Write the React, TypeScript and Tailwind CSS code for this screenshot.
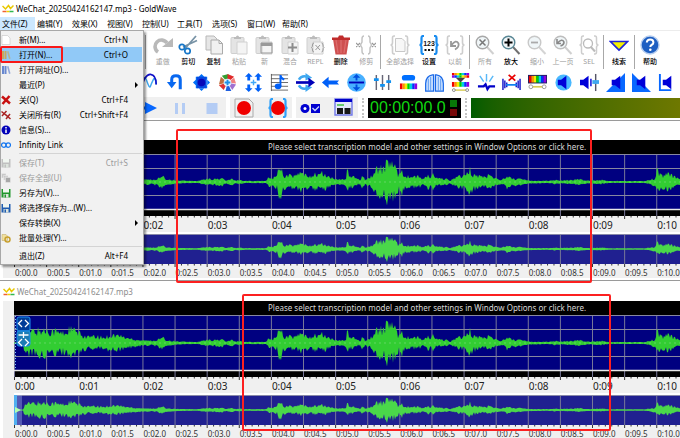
import type { ReactNode } from "react";

const FONT = "font-['Noto_Sans','Noto_Sans_CJK_SC',sans-serif]";

/* ---------- waveform data ---------- */

const PLOT_WIDTH = 666;
const SECONDS = 10.37;
const PX_PER_SECOND = PLOT_WIDTH / SECONDS;

// Loudness envelope as [position, peak] pairs, in plot units.
const ENVELOPE: [number, number][] = [
  [0, 0], [9, 0.4], [10, 8], [12, 13], [18, 14], [26, 15], [40, 15], [46, 12], [52, 12], [54, 16], [59, 16],
  [62, 13], [68, 9], [74, 7], [84, 7], [90, 6], [96, 9], [104, 9], [112, 6], [120, 4], [128, 3], [136, 2],
  [143, 3], [148, 6], [152, 3], [158, 2], [166, 1], [184, 0.6], [188, 2], [194, 3], [202, 3], [208, 4],
  [212, 1], [218, 3], [222, 1], [226, 2], [230, 0.7], [252, 0.8], [254, 4], [260, 5], [263, 7], [265, 21],
  [267, 19], [269, 8], [274, 7], [278, 8], [281, 6], [286, 11], [292, 7], [300, 8], [308, 10], [314, 6],
  [319, 4], [323, 2], [330, 3], [332, 4], [333, 15], [335, 7], [339, 6], [343, 3], [346, 2], [348, 8],
  [351, 3], [355, 4], [358, 8], [362, 13], [366, 19], [369, 15], [373, 22], [377, 26], [380, 18], [383, 11],
  [386, 9], [387, 19], [389, 9], [394, 6], [404, 6], [410, 3], [414, 8], [417, 4], [419, 10], [422, 4],
  [432, 3], [436, 1], [441, 5], [447, 7], [452, 6], [454, 13], [456, 14], [459, 9], [465, 7], [472, 5],
  [475, 10], [478, 5], [484, 3], [491, 3], [493, 8], [497, 4], [506, 3], [518, 1], [534, 0.8], [542, 2],
  [548, 1], [556, 2], [564, 3], [574, 1], [588, 2], [594, 0.6], [630, 0.6], [636, 2], [641, 4], [643, 14],
  [648, 7], [654, 9], [660, 6], [666, 3],
];

function envelopeAt(x: number) {
  for (let i = 1; i < ENVELOPE.length; i++) {
    const [x1, y1] = ENVELOPE[i];
    if (x <= x1) {
      const [x0, y0] = ENVELOPE[i - 1];
      return y0 + ((y1 - y0) * (x - x0)) / (x1 - x0);
    }
  }
  return 3;
}

function noise(n: number) {
  const s = Math.sin(n * 127.1) * 43758.5453;
  return s - Math.floor(s);
}

function wavePath(center: number, scale: number) {
  const top: string[] = [];
  const bottom: string[] = [];
  for (let x = 0; x <= PLOT_WIDTH; x += 1) {
    const peak = envelopeAt(x) * scale;
    top.push(`${x},${(center - 0.5 - peak * (0.4 + 0.7 * noise(x))).toFixed(1)}`);
    bottom.unshift(`${x},${(center + 0.5 + peak * (0.38 + 0.68 * noise(x + 900))).toFixed(1)}`);
  }
  return `M${top.join("L")}L${bottom.join("L")}Z`;
}

const MAIN_WAVE = wavePath(27, 1);
const OVERVIEW_WAVE = wavePath(15, 0.54);
const HALF_SECONDS = Array.from({ length: 21 }, (_, i) => i);
const TENTHS = Array.from({ length: 104 }, (_, i) => i);

/* ---------- icons ---------- */

function Icon({ children, size = 20 }: { children: ReactNode; size?: number }) {
  return (
    <svg width={size} height={size} viewBox="0 0 20 20" fill="none" aria-hidden="true">
      {children}
    </svg>
  );
}

const RAINBOW = ["#f00000", "#ff9000", "#f0f000", "#00d000", "#00d0e0", "#0030ff", "#9000e0"];

function Rainbow({ x, y, w, h, flip = false }: { x: number; y: number; w: number; h: number; flip?: boolean }) {
  const colors = flip ? [...RAINBOW].reverse() : RAINBOW;
  return (
    <>
      {colors.map((c, i) => (
        <rect key={c} x={x + (i * w) / 7} y={y} width={w / 7 + 0.1} height={h} fill={c} />
      ))}
    </>
  );
}

function Clipboard() {
  return (
    <>
      <rect x="2" y="2.500" width="13" height="16" rx="1" fill="#e4e4e4" stroke="#cfcfcf" />
      <path d="M5 4V2h2a1.500 1.500 0 0 1 3 0h2v2z" fill="#bcbcbc" />
      <path d="M8 7h10v12H8z" fill="#f4f4f4" stroke="#d0d0d0" />
    </>
  );
}

function Magnifier({ color, handle, children }: { color: string; handle: string; children?: ReactNode }) {
  return (
    <>
      <path d="M12 12l6.500 7" stroke={handle} strokeWidth="2" />
      <circle cx="7.500" cy="7.500" r="6.300" fill="#f0f6f8" stroke={color} strokeWidth="1.400" />
      {children}
    </>
  );
}

function Braces({ color, width = 2 }: { color: string; width?: number }) {
  return (
    <path
      d="M5 1H4Q2.500 1 2.500 3v4.500Q2.500 10 .5 10q2 0 2 2.500V17q0 2 1.500 2h1M15 1h1q1.500 0 1.500 2v4.500q0 2.500 2 2.500-2 0-2 2.500V17q0 2-1.500 2h-1"
      stroke={color}
      strokeWidth={width}
    />
  );
}

function Speaker({ x = 0 }: { x?: number }) {
  return <path d={`M${x + 2} 7h3.500L${x + 11} 3v14l-5.500-4H${x + 2}z`} fill="#0000d8" />;
}

const redo = (
  <Icon>
    <path d="M5 17A6.500 6.500 0 1 1 14 8" stroke="#b9b9b9" strokeWidth="3.600" />
    <path d="M9 12h11V3z" fill="#b9b9b9" />
  </Icon>
);
const cut = (
  <Icon>
    <path d="M18 1L7.500 13M19 5.500L5 12" stroke="#7893a6" strokeWidth="1.800" />
    <circle cx="4" cy="12" r="2.700" stroke="#1676c8" strokeWidth="1.700" />
    <circle cx="9.500" cy="16" r="2.700" stroke="#1676c8" strokeWidth="1.700" />
  </Icon>
);
const copy = (
  <Icon>
    <path d="M2 1h8l3 3v11H2z" fill="#e6e6e6" stroke="#b8b8b8" />
    <path d="M7 5h8l3.500 3.500V19H7z" fill="#f1f1f1" stroke="#aaa" />
    <path d="M15 5v3.500h3.500" stroke="#aaa" />
  </Icon>
);
const paste = <Icon><Clipboard /></Icon>;
const pasteNew = (
  <Icon>
    <Clipboard />
    <path d="M7 8h11v10H7z" stroke="#999" />
    <path d="M7 8h11v3H7z" fill="#999" />
  </Icon>
);
const mix = (
  <Icon>
    <Clipboard />
    <path d="M12.500 8v9M8 12.500h9" stroke="#8c8c8c" strokeWidth="2" />
  </Icon>
);
const replace = (
  <Icon>
    <Clipboard />
    <path d="M9 8Q7.500 8 7.500 10t-1 2.500q1 .5 1 2.500T9 17M16.500 8q1.500 0 1.500 2t1 2.500q-1 .5-1 2.500t-1.500 2M10.500 10l4.500 5M15 10l-4.500 5" stroke="#999" />
  </Icon>
);
const trash = (
  <Icon>
    <path d="M2 4l2.500 15.500h11L18 4z" fill="#cf5050" />
    <path d="M5 5l2 13M10 5v13M15 5l-2 13" stroke="#dc6c6c" strokeWidth="1.300" />
    <path d="M1 2.500h6L8 .5h4l1 2h6v2.500H1z" fill="#c02c2c" />
  </Icon>
);
const trim = (
  <Icon>
    <path d="M8 1Q6 1 6 4v3l-1.500 3L6 13v3q0 3 2 3M12 1q2 0 2 3v3l1.500 3-1.500 3v3q0 3-2 3" stroke="#c4c4c4" strokeWidth="1.500" />
    <path d="M0 8l4 4M4 8l-4 4M16 8l4 4M20 8l-4 4" stroke="#999" strokeWidth="1.200" />
  </Icon>
);
const selectAll = (
  <Icon>
    <Braces color="#cdcdcd" width={1.6} />
    <path d="M5.500 3.500H12l3 3v10H5.500z" fill="#f7f7f7" stroke="#c8c8c8" />
  </Icon>
);
const setSelection = (
  <Icon>
    <Braces color="#178bf0" width={2.2} />
    <text x="10" y="10.500" textAnchor="middle" fontSize="7" fontWeight="700" fill="#111" fontFamily="Liberation Sans">123</text>
    <path d="M5.500 15h2M9 15h2M12.500 15h2" stroke="#111" strokeWidth="2" />
  </Icon>
);
const previous = (
  <Icon>
    <Braces color="#cdcdcd" width={1.600} />
    <path d="M6 6v5h5M6.500 10Q11 4 13.500 8.500 14.500 12 10 14.500" stroke="#999" strokeWidth="1.800" />
  </Icon>
);
const zoomAll = <Icon><Magnifier color="#a8a8a8" handle="#d0d0d0"><path d="M4.500 4.500l6 6M10.500 4.500l-6 6" stroke="#777" strokeWidth="1.500" /></Magnifier></Icon>;
const zoomIn = <Icon><Magnifier color="#5a8795" handle="#707070"><path d="M7.500 3.500v8M3.500 7.500h8" stroke="#000" strokeWidth="2" /></Magnifier></Icon>;
const zoomOut = <Icon><Magnifier color="#c8c8c8" handle="#d4d4d4"><path d="M4 7.500h7" stroke="#aaa" strokeWidth="1.800" /></Magnifier></Icon>;
const zoomPrev = <Icon><Magnifier color="#bdbdbd" handle="#d0d0d0"><path d="M4 4v4.500h4M4.500 8Q9 3 11 7q0 3-3.500 4" stroke="#888" strokeWidth="1.600" /></Magnifier></Icon>;
const zoomSel = (
  <Icon>
    <Braces color="#cdcdcd" width={1.500} />
    <path d="M11.500 11.500l4.500 5" stroke="#bbb" strokeWidth="2" />
    <circle cx="9" cy="8.500" r="4.500" stroke="#bbb" strokeWidth="1.300" />
  </Icon>
);
const cue = <Icon><path d="M1.500 6.500h17L10 15z" fill="#f4f000" stroke="#1f24d8" strokeWidth="1.600" /></Icon>;
const help = (
  <Icon>
    <circle cx="10" cy="10" r="9" fill="#1e5fc2" stroke="#b6cdee" strokeWidth="1.400" />
    <path d="M6.800 7.500Q7 4.500 10.200 4.500t3.200 3Q13.400 9 11.500 10 10.300 10.600 10.300 12" stroke="#fff" strokeWidth="2" />
    <circle cx="10.300" cy="14.800" r="1.300" fill="#fff" />
  </Icon>
);

const EFFECTS: [string, ReactNode][] = [
  ["多普勒", <><path d="M0 16Q4-1 7 8t4 6 3-7 3 5" stroke="#40a8f0" strokeWidth="1.500" /><path d="M1 17Q5 1 11 1.500T17 12" stroke="#1010c8" strokeWidth="1.800" /></>],
  ["反向", <><path d="M15 17V7q0-4-4.500-4T6 7v4" stroke="#0868f0" strokeWidth="3.200" /><path d="M1 9.500h10L6 16z" fill="#0868f0" /></>],
  ["动态", <><path d="M10 1l3.500 3.500h-7zM10 19l3.500-3.500h-7zM1 10l3.500-3.500v7zM19 10l-3.500-3.500v7zM4 4h12v12H4z" fill="#0070f8" /><path d="M5 4h10v12H5z" fill="#0848e0" /><circle cx="10" cy="10" r="4" fill="#0808b8" /></>],
  ["回声", <><path d="M10 10L4 3l7-2z" fill="#30a030" /><path d="M10 10V1l7 3z" fill="#e02828" /><path d="M10 10l7-5 2 6z" fill="#f08080" /><path d="M10 10l9 2-4 6z" fill="#a070d0" /><path d="M10 10l4 9H8z" fill="#2060e0" /><path d="M10 10l-4 8-5-5z" fill="#e03030" /><path d="M10 10L1 12l2-8z" fill="#c07040" /><circle cx="10" cy="10" r="4" fill="#e8f6ff" /><path d="M10 7v6M7 10h6" stroke="#2090e8" strokeWidth="2" /></>],
  ["均衡", <><path d="M5 0l4 4H6.500v4h-3V4H1zM15 0l4 4h-2.500v4h-3V4H11zM5 20l4-4H6.500v-4h-3v4H1zM15 20l4-4h-2.500v-4h-3v4H11z" fill="#0060f8" /><path d="M10 7v6M7 10h6" stroke="#40a8f8" strokeWidth="1.500" /></>],
  ["音高", <><path d="M1 2h18M1 6h18M1 10h18M1 14h18M1 18h18M1.500 1v18" stroke="#555" strokeWidth=".9" /><path d="M11 14V2q0 3 4 5" stroke="#0060f8" strokeWidth="2" /><ellipse cx="8.500" cy="14" rx="3.500" ry="3" fill="#0060f8" /></>],
  ["机械化", <><path d="M3 7Q6 2 12 4M3 13q3 5 9 3" stroke="#40a8f0" strokeWidth="2.600" /><path d="M10 0l7 5-7 3zM10 20l7-5-7-3z" fill="#40a8f0" /><path d="M0 10h14" stroke="#0000b8" strokeWidth="2.800" /><path d="M13 5l7 5-7 5z" fill="#0000b8" /></>],
  ["偏移", <><path d="M19 8H8V4l-7 6 7 6v-4h11l-2-2z" fill="#0060f8" /></>],
  ["压缩", <><circle cx="10" cy="10" r="9.800" fill="#48b0ff" /><path d="M2 10h16" stroke="#0000b8" strokeWidth="2" /><path d="M10 1l4 4h-3v3H9V5H6zM10 19l4-4h-3v-3H9v3H6z" fill="#0050e0" /></>],
  ["均衡器", <><path d="M3.500 2v16M10 2v16M16.500 2v16" stroke="#667" strokeWidth="1.500" /><path d="M1 7h5M7.500 13h5M14 9h5" stroke="#1090f0" strokeWidth="3" /></>],
  ["滤波器", <><rect x="3" y="2" width="14" height="6" rx="3" fill="#0070ff" /><Rainbow x={1} y={11} w={18} h={6} /></>],
  ["噪音门", <><path d="M.7 19v-8Q1 3 8 2h1v17zM19.300 19v-8Q19 3 12 2h-1v17z" fill="#d0e4ff" stroke="#1868e8" strokeWidth="1.300" /><path d="M3.500 6v13M6 4v15M14 4v15M16.500 6v13" stroke="#5898f0" /></>],
  ["频谱", <><Rainbow x={1} y={0} w={18} h={2.500} /><Rainbow x={1} y={2.500} w={18} h={2.500} flip /><path d="M5 5h10l-5 5z" fill="#444" /><Rainbow x={1} y={9.500} w={18} h={5} /><path d="M4 18h12" stroke="#d8cc50" strokeWidth="1.500" /><circle cx="3" cy="18" r="1.500" fill="#fff" stroke="#888" /><circle cx="17" cy="18" r="1.500" fill="#fff" stroke="#888" /></>],
  ["爆音", <><path d="M10 9V1M7 9L3 3M13 9l4-6" stroke="#58b8f8" strokeWidth="1.500" /><path d="M1 14h6l2-2 2 5 2-3h6" stroke="#0000c8" strokeWidth="2.400" /></>],
  ["静音", <><path d="M1 6v12M3 8v8M5 10v5M15 10v5M17 8v8M19 6v12" stroke="#1010c8" strokeWidth="1.500" /><path d="M4 12.500h12" stroke="#1080f0" strokeWidth="1.800" /><path d="M7 2l7 6M14 2L7 8" stroke="#e80000" strokeWidth="1.800" /></>],
  ["谱段", <><path d="M0 2h20v9H0z" fill="#202060" /><Rainbow x={1} y={3} w={18} h={7} /><path d="M4 14.500h12" stroke="#d8cc50" strokeWidth="1.800" /><circle cx="3" cy="14.500" r="2" fill="#fff" stroke="#999" /><circle cx="17" cy="14.500" r="2" fill="#fff" stroke="#999" /></>],
  ["最大音量", <><circle cx="10" cy="10" r="8.500" fill="#48b8ff" /><Speaker x={2} /></>],
  ["更改音量", <><Speaker x={-2} /><path d="M11.500 6v8" stroke="#0000d8" strokeWidth="1.500" /><path d="M16.500 1v18" stroke="#556" strokeWidth="1.500" /><path d="M13 9.500h7" stroke="#40a8f0" strokeWidth="4" /></>],
  ["淡入", <><path d="M0 20L20 0v20z" fill="#0868ff" /><Speaker x={4} /></>],
  ["淡出", <><path d="M0 0l20 20H0z" fill="#0868ff" /><Speaker x={3} /></>],
  ["匹配音量", <><path d="M2 1v17h12" stroke="#0868ff" strokeWidth="2" /><Speaker x={3} /></>],
];

/* ---------- toolbar pieces ---------- */

function ToolButton({ label, icon, on = false, wide = false }: { label: string; icon: ReactNode; on?: boolean; wide?: boolean }) {
  return (
    <button type="button" className={`flex min-w-0 flex-col items-center gap-0.5 whitespace-nowrap ${wide ? "w-8 shrink-0" : "flex-1"}`}>
      {icon}
      <span className={`text-[7px] leading-[10px] ${on ? "font-medium text-black" : "text-[#a0a0a0]"}`}>{label}</span>
    </button>
  );
}

const Divider = () => <span className="mx-px h-9 w-px shrink-0 bg-[#a8a8a8]" />;
const Grip = () => <span className="mx-1 h-5 shrink-0 border-l-2 border-dotted border-[#c4c4c4]" />;

function Toolbars() {
  return (
    <div className="border-y border-t-[#ececec] border-b-[#9a9a9a] bg-white">
      <div className="flex h-[38px] items-start overflow-hidden pt-1 pl-36">
        <Divider />
        <div className="flex w-[232px] shrink-0 pl-[3px]">
          <ToolButton label="重做" icon={redo} />
          <ToolButton label="剪切" icon={cut} on />
          <ToolButton label="复制" icon={copy} on />
          <ToolButton label="粘贴" icon={paste} />
          <ToolButton label="新" icon={pasteNew} />
          <ToolButton label="混合" icon={mix} />
          <ToolButton label="REPL" icon={replace} />
          <ToolButton label="删除" icon={trash} on />
          <ToolButton label="修剪" icon={trim} />
        </div>
        <Divider />
        <div className="flex w-[86px] shrink-0 pl-0.5">
          <ToolButton label="全部选择" icon={selectAll} wide />
          <ToolButton label="设置" icon={setSelection} on />
          <ToolButton label="以前" icon={previous} />
        </div>
        <Divider />
        <div className="flex w-[131px] shrink-0 pl-px">
          <ToolButton label="所有" icon={zoomAll} />
          <ToolButton label="放大" icon={zoomIn} on />
          <ToolButton label="缩小" icon={zoomOut} />
          <ToolButton label="上一页" icon={zoomPrev} />
          <ToolButton label="SEL" icon={zoomSel} />
        </div>
        <Divider />
        <div className="flex w-7 shrink-0"><ToolButton label="线索" icon={cue} on /></div>
        <Divider />
        <div className="flex w-7 shrink-0"><ToolButton label="帮助" icon={help} on /></div>
      </div>

      <div className="flex h-[26px] items-center overflow-hidden pl-[137px]">
        {EFFECTS.map(([name, art]) => (
          <button key={name} type="button" aria-label={name} className="flex flex-1 justify-center">
            <Icon size={19}>{art}</Icon>
          </button>
        ))}
      </div>

      <div className="flex h-[25px] items-center overflow-hidden">
        <div className="flex h-[21px] w-[226px] shrink-0 items-center gap-3 bg-[#f0f0f0] pl-[138px]">
          <button type="button" aria-label="播放"><Icon><path d="M0 8.500h7V4l12 6-12 6v-4.500H0z" fill="#0868ff" /></Icon></button>
          <button type="button" aria-label="暂停"><Icon><path d="M5 5h3v11H5zM12 5h3v11h-3z" fill="#b4ccf4" /></Icon></button>
          <button type="button" aria-label="停止"><Icon><path d="M4.500 5h11v11h-11z" fill="#b4ccf4" /></Icon></button>
        </div>
        <div className="ml-1 flex h-[21px] w-[62px] shrink-0 items-center justify-between bg-[#f0f0f0] px-1">
          <button type="button" aria-label="录音"><Icon><path d="M1 1h14l4 4v14H1z" fill="#f0f0f0" stroke="#aaa" /><circle cx="10" cy="10" r="7" fill="#f00000" /></Icon></button>
          <button type="button" aria-label="录制选区"><Icon><Braces color="#30a0f8" width={2.2} /><circle cx="10" cy="10" r="7" fill="#f00000" /></Icon></button>
        </div>
        <div className="ml-1 flex h-[21px] w-[62px] shrink-0 items-center justify-between bg-[#f0f0f0] px-1">
          <button type="button" aria-label="设置"><Icon><circle cx="5" cy="10.500" r="4.500" fill="#0000d0" /><circle cx="5" cy="10.500" r="1.500" fill="#fff" /><path d="M11 6h9v9h-9z" fill="#0000d0" /><path d="M12.500 10l2.500 2.500 4-4" stroke="#c8d8ff" strokeWidth="1.300" /></Icon></button>
          <button type="button" aria-label="显示窗口"><Icon><path d="M1 1h17v16H1z" fill="#e4e8f8" stroke="#7078e8" strokeWidth="1.400" /><path d="M1 1h17v3H1z" fill="#0000c8" /><path d="M3 10h6v6H3zM10.500 10h6v6h-6z" fill="#181818" /><path d="M3 7h7" stroke="#40c040" strokeWidth="1.500" /></Icon></button>
        </div>
        <Grip />
        <div className="flex h-5 w-[93px] shrink-0 items-center justify-between bg-black pr-1 pl-0.5">
          <output className="font-['Liberation_Sans',sans-serif] text-[16px] leading-5 text-[#10d810]">00:00:00.0</output>
          <span className="flex flex-col gap-0.5">
            <span className="h-[7px] w-[7px] bg-[#087808]" />
            <span className="h-[7px] w-[7px] bg-[#780808]" />
          </span>
        </div>
        <Grip />
        <div className="h-5 flex-1 bg-linear-to-r from-[#005c00] to-[#6e7800]" />
      </div>
    </div>
  );
}

/* ---------- file menu ---------- */

type Entry = { label: string; keys?: string; icon?: ReactNode; more?: boolean; off?: boolean; active?: boolean };

const disk = (color: string) => (
  <><path d="M1 2h18v17H1z" fill={color} /><path d="M4 2h12v7H4z" fill="#f0f6f0" /><path d="M5 12h10v7H5z" fill="#dde4dd" /><path d="M7 13h3v6H7z" fill={color} /></>
);
const books = (color: string) => (
  <><path d="M2 2h4v16H2zM7 2h4v16H7z" fill={color} /><path d="M12 3l3-1 4 15-3 1z" fill={color} opacity=".7" /></>
);

const MENU: Entry[][] = [
  [
    { label: "新(M)...", keys: "Ctrl+N", icon: <path d="M2 1h11l5 5v13H2z" fill="#fff" stroke="#bbb" /> },
    { label: "打开(N)...", keys: "Ctrl+O", icon: books("#c8a860"), active: true },
    { label: "打开网址(O)...", icon: books("#6888d0") },
    { label: "最近(P)", more: true },
    { label: "关(Q)", keys: "Ctrl+F4", icon: <path d="M2 3l16 14M17 2L3 18" stroke="#c81010" strokeWidth="5" /> },
    { label: "关闭所有(R)", keys: "Ctrl+Shift+F4", icon: <path d="M1 3l11 9M11 2L2 12M9 9l10 9M18 8l-8 10" stroke="#a82020" strokeWidth="3" /> },
    { label: "信息(S)...", icon: <><circle cx="10" cy="10" r="9" fill="#0000b8" /><path d="M10 9v7M10 4v3" stroke="#fff" strokeWidth="3" /></> },
    { label: "Infinity Link", icon: <><circle cx="5.500" cy="10" r="4.500" stroke="#1878f0" strokeWidth="2.500" /><circle cx="14.500" cy="10" r="4.500" stroke="#1878f0" strokeWidth="2.500" /></> },
  ],
  [
    { label: "保存(T)", keys: "Ctrl+S", icon: disk("#c0c0c0"), off: true },
    { label: "保存全部(U)", icon: <><path d="M1 1h9v9H1zM5 5h9v9H5z" fill="#c8c8c8" stroke="#eee" /><path d="M9 9h10v10H9z" fill="#a8a8a8" stroke="#eee" /></>, off: true },
    { label: "另存为(V)...", icon: disk("#20962c") },
    { label: "将选择保存为...(W)...", icon: disk("#205cb0") },
    { label: "保存转换(X)", more: true },
    { label: "批量处理(Y)...", icon: <><path d="M2 3h8l3 3v9H2z" fill="#f0e0a0" stroke="#c0a860" /><circle cx="13" cy="13" r="5" stroke="#c8a030" strokeWidth="3" /></> },
  ],
  [{ label: "退出(Z)", keys: "Alt+F4" }],
];

function FileMenu() {
  return (
    <div role="menu" className="absolute top-full left-0 z-20 w-36 border border-[#a8a8a8] bg-[#f1f1f1] py-px pr-px shadow-[2px_2px_2px_rgba(0,0,0,0.4)]">
      {MENU.map((group, g) => (
        <div key={g}>
          {g > 0 && <div className="my-px ml-[18px] h-px bg-[#d4d4d4]" />}
          {group.map((e) => (
            <button
              key={e.label}
              type="button"
              role="menuitem"
              disabled={e.off}
              className={`relative flex h-[15px] w-full items-center whitespace-nowrap text-left text-[8px] leading-[15px] ${e.off ? "text-[#9a9a9a]" : "text-black"} ${e.active ? "bg-[#91c9f7]" : ""}`}
            >
              <span className="w-[18px] shrink-0">{e.icon && <Icon size={10}>{e.icon}</Icon>}</span>
              <span className="flex-1">{e.label}</span>
              {e.keys && <span className="pr-3.5">{e.keys}</span>}
              {e.more && <span className="mr-1 border-y-[3px] border-l-[3px] border-y-transparent border-l-black" />}
              {e.active && <span className="absolute -inset-y-px -left-px w-[63px] rounded-xs border-2 border-[#f81818]" />}
            </button>
          ))}
        </div>
      ))}
    </div>
  );
}

const MENU_BAR = ["文件(Z)", "编辑(Y)", "效果(X)", "视图(V)", "控制(U)", "工具(T)", "选项(S)", "窗口(W)", "帮助(R)"];

const Logo = () => (
  <svg width="12" height="10" viewBox="0 0 24 20" fill="none" aria-hidden="true">
    <path d="M1 4l6 6 6-7 4 6 6-6" stroke="#e8c800" strokeWidth="3" />
    <path d="M1 15h8" stroke="#f06030" strokeWidth="3" />
    <path d="M9 15h6" stroke="#f0d000" strokeWidth="3" />
    <path d="M15 15h8" stroke="#30b850" strokeWidth="3" />
  </svg>
);

/* ---------- sound windows ---------- */

function GridLines({ height }: { height: number }) {
  return (
    <>
      {HALF_SECONDS.map((i) => (
        <line key={i} x1={(i * PX_PER_SECOND) / 2 + 0.5} x2={(i * PX_PER_SECOND) / 2 + 0.5} y1="0" y2={height} stroke="#777798" />
      ))}
    </>
  );
}

function Ticks({ every }: { every: number }) {
  return (
    <svg className="block h-[3px] w-full" viewBox={`0 0 ${PLOT_WIDTH} 3`} preserveAspectRatio="none" aria-hidden="true">
      {TENTHS.map((i) => (
        <line key={i} x1={(i * PX_PER_SECOND) / 10 + 0.5} x2={(i * PX_PER_SECOND) / 10 + 0.5} y1="0" y2={i % every === 0 ? 3 : 1.5} stroke="#333" />
      ))}
    </svg>
  );
}

function Ruler({ step, className }: { step: number; className: string }) {
  const count = Math.ceil(SECONDS / step);
  return (
    <div className={`flex ${className}`}>
      {Array.from({ length: count }, (_, i) => (
        <span key={i} className="shrink-0 pl-px" style={{ width: `${(100 * step) / SECONDS}%` }}>
          {step === 1 ? `0:${String(i).padStart(2, "0")}` : `0:${(i * step).toFixed(1).padStart(4, "0")}`}
        </span>
      ))}
    </div>
  );
}

function SoundWindow({ title, selected = false }: { title?: string; selected?: boolean }) {
  return (
    <section className="mb-px border-b border-[#9a9a9a] bg-white pb-0.5 pl-[3px]">
      <div className="flex h-[19px] items-center gap-0.5 text-[8px] text-[#8c8c8c]">
        {title && <><Logo />{title}</>}
      </div>
      <div className="bg-[#f0f0f0] pl-[11px]">
        <div className="h-3.5 bg-black pl-[254px] text-[8px] leading-3.5 whitespace-nowrap text-[#d8d8d8]">
          Please select transcription model and other settings in Window Options or click here.
        </div>
        <svg className="block h-[62px] w-full" viewBox="0 0 666 62" preserveAspectRatio="none" aria-hidden="true">
          <rect width="666" height="62" fill="#000" />
          <rect y="1" width="666" height="54" fill="#000080" />
          <GridLines height={62} />
          <path d="M0 .5h666M0 14.500h666M0 41.500h666" stroke="#8888a0" />
          <path d="M0 55.500h666" stroke="#e8e8e8" strokeWidth="1.500" />
          <g transform="translate(0 1)">
            <path d={MAIN_WAVE} fill="#32cd32" />
            <path d="M0 27h666" stroke="#8ce08c" strokeWidth=".8" strokeDasharray="2 3" opacity=".7" />
          </g>
          {selected && (
            <>
              <path d="M1.500 1v54" stroke="#80c8ff" strokeDasharray="1 2" />
              <rect x="3" y="2" width="13" height="14" rx="2" fill="#003c98" stroke="#1890f0" />
              <rect x="3" y="16" width="13" height="15" rx="2" fill="#1c7cb4" stroke="#1890f0" />
              <path d="M8 5L4.500 8.500 8 12M11 5l3.500 3.500L11 12M8 24l-3.500 3.500L8 31M11 24l3.500 3.500L11 31M4.500 20h10M9.500 17v6" stroke="#fff" strokeWidth="1.300" fill="none" />
            </>
          )}
        </svg>
        <Ticks every={5} />
        <Ruler step={1} className="h-[13px] text-[10px] leading-[13px] text-[#222]" />
        <div className="h-0.5 bg-white" />
        <svg className="block h-[30px] w-full" viewBox="0 0 666 30" preserveAspectRatio="none" aria-hidden="true">
          <rect width="666" height="30" fill="#202090" />
          <GridLines height={30} />
          <path d="M0 .5h666" stroke="#8888a8" />
          <path d={OVERVIEW_WAVE} fill="#4ad84a" />
          {selected && (
            <>
              <rect width="3" height="30" fill="#50b0f0" />
              <rect x="3" width="5" height="30" fill="#a0b0e8" opacity=".4" />
              <path d="M1 12l6 3-6 3z" fill="#b0ffb0" />
            </>
          )}
        </svg>
        <Ticks every={5} />
        <Ruler step={0.5} className="h-[11px] text-[8px] leading-[11px] text-[#333]" />
      </div>
    </section>
  );
}

export default function App() {
  return (
    <main className={`relative h-screen overflow-hidden bg-white text-black ${FONT}`}>
      <header className="flex h-[17px] items-center gap-0.5 pl-0.5 text-[8px] leading-4">
        <Logo />
        <h1>WeChat_20250424162147.mp3 - GoldWave</h1>
      </header>
      <nav className="relative flex h-[13px]">
        {MENU_BAR.map((m, i) => (
          <button key={m} type="button" className={`w-[35px] px-0.5 text-left text-[8px] leading-[13px] whitespace-nowrap ${i === 0 ? "bg-[#cce8ff]" : ""}`}>
            {m}
          </button>
        ))}
        <FileMenu />
      </nav>
      <Toolbars />
      <SoundWindow />
      <SoundWindow title="WeChat_20250424162147.mp3" selected />
      {/* annotation frames drawn over the windows */}
      <div className="pointer-events-none absolute top-[129px] left-44 z-10 h-[154px] w-[416px] rounded-xs border-2 border-[#fc2020]" />
      <div className="pointer-events-none absolute top-[294px] left-[242px] z-10 h-[137px] w-[369px] rounded-xs border-2 border-[#fc2020]" />
    </main>
  );
}
